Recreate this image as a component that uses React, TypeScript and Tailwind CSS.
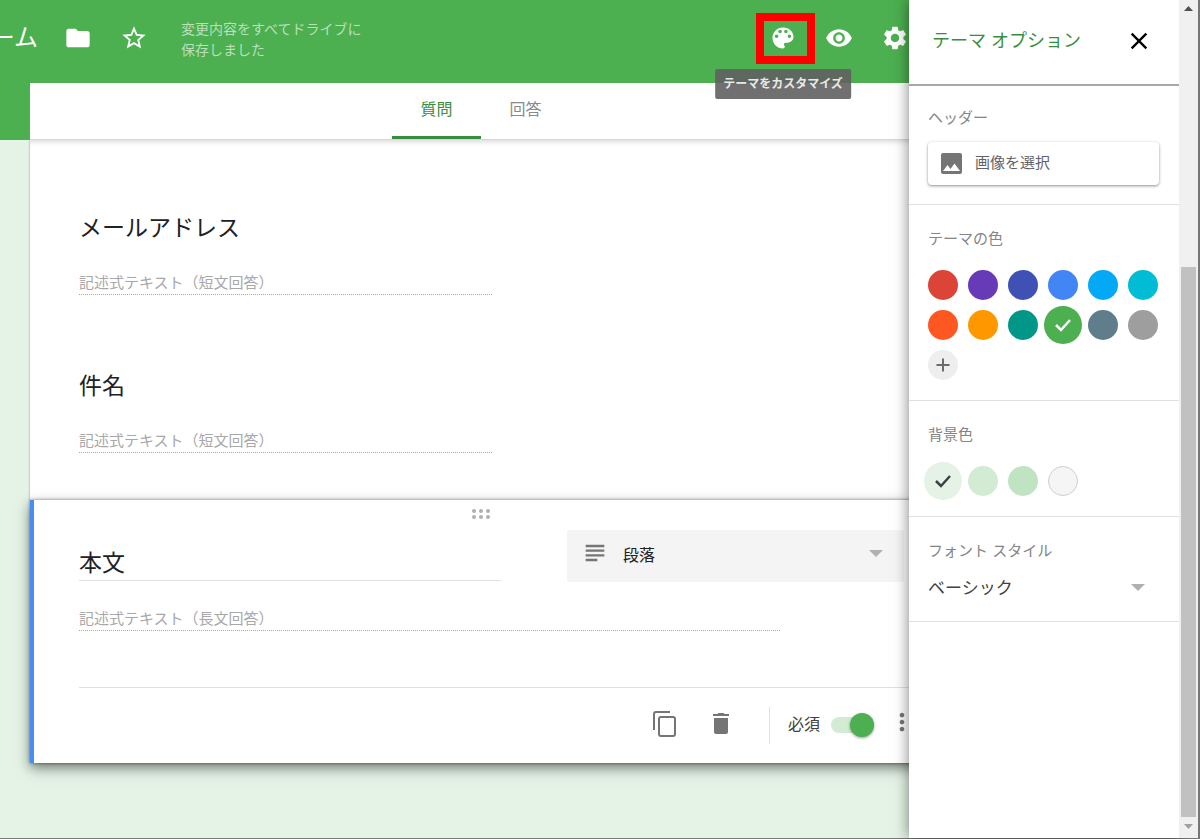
import { clsx } from "clsx";
import type { ReactNode } from "react";
import {
  MdClose,
  MdFolder,
  MdMoreVert,
  MdSettings,
  MdStarBorder,
  MdSubject,
  MdVisibility,
} from "react-icons/md";

const themeColors = [
  { name: "赤", color: "bg-[#db4437]" },
  { name: "紫", color: "bg-[#673ab7]" },
  { name: "藍", color: "bg-[#3f51b5]" },
  { name: "青", color: "bg-[#4285f4]" },
  { name: "水色", color: "bg-[#03a9f4]" },
  { name: "シアン", color: "bg-[#00bcd4]" },
  { name: "朱色", color: "bg-[#ff5722]" },
  { name: "オレンジ", color: "bg-[#ff9800]" },
  { name: "青緑", color: "bg-[#009688]" },
  { name: "緑", color: "bg-[#4caf50]", check: "stroke-white" },
  { name: "青灰色", color: "bg-[#607d8b]" },
  { name: "グレー", color: "bg-[#9e9e9e]" },
];

const backgroundColors = [
  { name: "薄い緑", color: "bg-[#e4f3e5]", check: "stroke-[#3c4043]" },
  { name: "緑", color: "bg-[#d2ebd3]" },
  { name: "濃い緑", color: "bg-[#c0e3c2]" },
  { name: "白", color: "border border-[#cfcfcf] bg-[#f5f5f5]" },
];

function IconButton({
  label,
  className,
  children,
}: {
  label: string;
  className?: string;
  children: ReactNode;
}) {
  return (
    <button
      aria-label={label}
      className={clsx("grid h-14 w-14 place-items-center", className)}
      type="button"
    >
      {children}
    </button>
  );
}

function Caret({ className }: { className: string }) {
  return (
    <svg
      aria-hidden="true"
      className={clsx("pointer-events-none absolute fill-[#b0b0b0]", className)}
      height="7"
      viewBox="0 0 14 7"
      width="14"
    >
      <path d="M0 0h14L7 7z" />
    </svg>
  );
}

function Toolbar() {
  return (
    <header className="flex h-[83px] items-center bg-[#4caf50] pr-[9px] pb-[7px] text-white">
      <div className="mr-3 flex w-[38px] justify-end overflow-hidden whitespace-nowrap text-2xl">
        ーム
      </div>
      <IconButton label="フォルダに移動">
        <MdFolder size={28} />
      </IconButton>
      <IconButton label="スターを付ける">
        <MdStarBorder size={28} />
      </IconButton>
      <p className="ml-[19px] pt-1 text-[#b9e0bb] text-sm leading-[21px]">
        変更内容をすべてドライブに
        <br />
        保存しました
      </p>
      <div className="ml-auto flex">
        <div className="relative z-10">
          <IconButton label="テーマをカスタマイズ">
            <svg
              aria-hidden="true"
              fill="currentColor"
              height="28"
              viewBox="0 0 24 24"
              width="28"
            >
              <path d="M12 3c-4.970 0-9 4.030-9 9s4.030 9 9 9c.83 0 1.500-.67 1.500-1.500 0-.39-.15-.74-.39-1.010-.23-.26-.38-.61-.38-.99 0-.83.67-1.500 1.500-1.500H16c2.760 0 5-2.240 5-5 0-4.420-4.030-8-9-8zm-5.500 9c-.83 0-1.500-.67-1.500-1.500S5.670 9 6.500 9 8 9.670 8 10.500 7.330 12 6.500 12zm3-4C8.670 8 8 7.330 8 6.500S8.670 5 9.500 5s1.500.67 1.500 1.500S10.330 8 9.500 8zm5 0c-.83 0-1.500-.67-1.500-1.500S13.670 5 14.500 5s1.500.67 1.500 1.500S15.330 8 14.500 8zm3 4c-.83 0-1.500-.67-1.500-1.500S16.670 9 17.500 9s1.500.67 1.500 1.500-.67 1.500-1.500 1.500z" />
            </svg>
          </IconButton>
          <span className="pointer-events-none absolute top-[3px] left-px h-[51px] w-[59px] border-8 border-[#ff0000]" />
          <span
            className="absolute top-[59px] left-1/2 -translate-x-1/2 whitespace-nowrap rounded-xs bg-[#616161]/90 px-2 font-bold text-[#e8e8e8] text-xs leading-[30px]"
            role="tooltip"
          >
            テーマをカスタマイズ
          </span>
        </div>
        <IconButton label="プレビュー">
          <MdVisibility size={28} />
        </IconButton>
        <IconButton label="設定">
          <MdSettings size={28} />
        </IconButton>
      </div>
    </header>
  );
}

function Tabs() {
  return (
    <div className="bg-[#4caf50] pl-[30px]">
      <nav className="flex h-[57px] justify-center border-[#dedede] border-b bg-white">
        <button
          className="h-14 w-[89px] border-[#388e3c] border-b-[3px] text-[#388e3c]"
          type="button"
        >
          質問
        </button>
        <button
          className="h-14 w-[89px] border-transparent border-b-[3px] text-[#8a8a8a]"
          type="button"
        >
          回答
        </button>
      </nav>
    </div>
  );
}

function AnswerField({ text, className }: { text: string; className: string }) {
  return (
    <input
      aria-label={text}
      className={clsx(
        "block h-[25px] border-[#a8a8a8] border-b border-dotted bg-transparent text-[15px] placeholder:text-[#a8a8a8]",
        className
      )}
      placeholder={text}
      readOnly
      type="text"
    />
  );
}

function ShortQuestion({ title }: { title: string }) {
  return (
    <section>
      <h2 className="text-[#212121] text-[23px] leading-8">{title}</h2>
      <AnswerField
        className="mt-[26px] w-[413px]"
        text="記述式テキスト（短文回答）"
      />
    </section>
  );
}

function ActiveQuestion() {
  return (
    <section className="relative border-[#4a8cf7] border-l-4 bg-white pl-[45px] shadow-[0_0_3px_rgba(0,0,0,0.45),0_5px_12px_rgba(0,0,0,0.5)]">
      <div className="-ml-[49px] flex h-[30px] items-center justify-center pb-0.5">
        <svg
          aria-hidden="true"
          className="fill-[#b0b0b0]"
          height="10"
          viewBox="0 0 18 10"
          width="18"
        >
          {[2, 9, 16].map((x) => (
            <g key={x}>
              <circle cx={x} cy="2" r="2" />
              <circle cx={x} cy="8" r="2" />
            </g>
          ))}
        </svg>
      </div>

      <div className="flex pr-7">
        <input
          aria-label="質問のタイトル"
          className="mt-[17px] h-[34px] w-[422px] border-[#e0e0e0] border-b text-[#212121] text-[23px]"
          defaultValue="本文"
          type="text"
        />
        <div className="relative ml-[66px] flex h-[52px] flex-1 items-center rounded-xs bg-[#f4f4f4]">
          <MdSubject
            className="absolute top-[9px] left-[14px] text-[#757575]"
            size={28}
          />
          <select
            aria-label="質問の種類"
            className="h-full w-full appearance-none pl-14 text-[#212121]"
          >
            <option>段落</option>
          </select>
          <Caret className="top-5 right-[21px]" />
        </div>
      </div>

      <AnswerField
        className="mt-6 w-[701px]"
        text="記述式テキスト（長文回答）"
      />

      <div className="mt-14 flex h-[76px] items-center justify-end border-[#e0e0e0] border-t pr-0.5 text-[#757575]">
        <IconButton className="pb-1" label="コピーを作成">
          <svg
            aria-hidden="true"
            fill="none"
            height="26"
            stroke="currentColor"
            strokeWidth="2"
            viewBox="0 0 24 26"
            width="24"
          >
            <path d="M17 1H3a2 2 0 0 0-2 2v16" />
            <rect height="19" rx="2" width="16" x="6" y="6" />
          </svg>
        </IconButton>
        <IconButton className="pb-1" label="削除">
          <svg
            aria-hidden="true"
            fill="currentColor"
            height="22"
            viewBox="0 0 18 22"
            width="18"
          >
            <path d="M2 5h14v14a2 2 0 0 1-2 2H4a2 2 0 0 1-2-2z" />
            <path d="M1 1h4.500l1-1h5l1 1H17v2H1z" />
          </svg>
        </IconButton>
        <span className="ml-5 h-[37px] w-px bg-[#e0e0e0]" />
        <label className="ml-[18px] flex items-center pb-0.5 text-[#424242]">
          必須
          <input
            className="relative ml-[11px] h-4 w-[43px] appearance-none rounded-full bg-[#d2ebd3] before:absolute before:-top-1 before:right-0 before:h-6 before:w-6 before:rounded-full before:bg-[#4caf50] before:shadow-[0_1px_3px_rgba(0,0,0,0.4)]"
            defaultChecked
            type="checkbox"
          />
        </label>
        <IconButton className="pb-2" label="その他">
          <MdMoreVert size={28} />
        </IconButton>
      </div>
    </section>
  );
}

function Swatches({
  colors,
  children,
}: {
  colors: { name: string; color: string; check?: string }[];
  children?: ReactNode;
}) {
  return (
    <div className="-ml-[5px] mt-3.5 grid grid-cols-[repeat(6,40px)]">
      {colors.map(({ name, color, check }) => (
        <div className="grid h-10 place-items-center" key={name}>
          <button
            aria-label={name}
            className={clsx(
              "grid place-items-center rounded-full",
              check ? "h-[38px] w-[38px]" : "h-[30px] w-[30px]",
              color
            )}
            type="button"
          >
            {check && (
              <svg
                aria-hidden="true"
                className={check}
                fill="none"
                height="14"
                strokeWidth="2.500"
                viewBox="0 0 18 14"
                width="18"
              >
                <path d="M2 7l5 5L16 2" />
              </svg>
            )}
          </button>
        </div>
      ))}
      {children}
    </div>
  );
}

function PanelSection({
  title,
  className,
  children,
}: {
  title: string;
  className: string;
  children: ReactNode;
}) {
  return (
    <section
      className={clsx("border-[#e0e0e0] border-b pr-5 pl-[19px]", className)}
    >
      <h3 className="text-[#858585] text-[15px] leading-6">{title}</h3>
      {children}
    </section>
  );
}

function ThemePanel() {
  return (
    <aside className="relative z-20 w-[270px] shrink-0 bg-white shadow-[0_0_14px_rgba(0,0,0,0.5)]">
      <div className="flex h-[86px] items-center justify-between border-[#a8a8a8] border-b-2 pr-3 pb-[3px] pl-[23px]">
        <h2 className="text-[#388e3c] text-lg">テーマ オプション</h2>
        <IconButton className="text-black" label="閉じる">
          <MdClose size={28} />
        </IconButton>
      </div>

      <PanelSection className="pt-5 pb-[19px]" title="ヘッダー">
        <button
          className="mt-3 flex h-[43px] w-full items-center rounded-sm pl-[13px] text-[#5f6368] text-[15px] shadow-[0_1px_3px_rgba(0,0,0,0.45)]"
          type="button"
        >
          <svg
            aria-hidden="true"
            className="mr-[13px]"
            height="21"
            viewBox="0 0 21 21"
            width="21"
          >
            <rect fill="#757575" height="21" rx="2" width="21" />
            <path d="M2 18l4.500-6 3 4 4-5.500 5.500 7.500z" fill="#fff" />
          </svg>
          画像を選択
        </button>
      </PanelSection>

      <PanelSection className="pt-[22px] pb-[15px]" title="テーマの色">
        <Swatches colors={themeColors}>
          <div className="grid h-10 place-items-center">
            <button
              aria-label="カスタム色を追加"
              className="grid h-[30px] w-[30px] place-items-center rounded-full bg-[#eeeeee]"
              type="button"
            >
              <svg
                aria-hidden="true"
                height="14"
                stroke="#6b6b6b"
                strokeWidth="2"
                viewBox="0 0 14 14"
                width="14"
              >
                <path d="M7 0.500v13M0.500 7h13" />
              </svg>
            </button>
          </div>
        </Swatches>
      </PanelSection>

      <PanelSection className="pt-[22px] pb-[15px]" title="背景色">
        <Swatches colors={backgroundColors} />
      </PanelSection>

      <PanelSection className="pt-[22px] pb-3" title="フォント スタイル">
        <div className="relative mt-1.5">
          <select
            aria-label="フォント スタイル"
            className="h-10 w-full appearance-none text-[#424242] text-[17px]"
          >
            <option>ベーシック</option>
          </select>
          <Caret className="top-[15px] right-[14px]" />
        </div>
      </PanelSection>
    </aside>
  );
}

function ScrollTrack() {
  return (
    <div className="relative z-20 flex w-[19px] shrink-0 flex-col items-center bg-[#f0f0f0]">
      <svg aria-hidden="true" className="mt-[6px]" height="5" width="9">
        <path d="M0 5h9L4.500 0z" fill="#505050" />
      </svg>
      <div className="mt-64 mb-[7px] w-[15px] flex-1 bg-[#c1c1c1]" />
      <svg aria-hidden="true" className="mb-[9px]" height="5" width="9">
        <path d="M0 0h9L4.500 5z" fill="#a0a0a0" />
      </svg>
    </div>
  );
}

export default function App() {
  return (
    <div className="flex h-screen border-[#777777] border-r-2 border-b bg-[#e4f3e5] font-['Liberation_Sans','Noto_Sans_CJK_JP',sans-serif]">
      <main className="min-w-0 flex-1 overflow-hidden">
        {/* the form runs on beneath the theme panel */}
        <div className="-mr-[23px]">
          <Toolbar />
          <Tabs />
          <div className="pl-[30px]">
            <div className="bg-white pt-[72px] pb-[47px] pl-[49px] shadow-[0_1px_2px_rgba(0,0,0,0.4),inset_0_6px_5px_-4px_rgba(0,0,0,0.15)]">
              <ShortQuestion title="メールアドレス" />
              <div className="h-[75px]" />
              <ShortQuestion title="件名" />
            </div>
            <ActiveQuestion />
          </div>
        </div>
      </main>
      <ThemePanel />
      <ScrollTrack />
    </div>
  );
}
